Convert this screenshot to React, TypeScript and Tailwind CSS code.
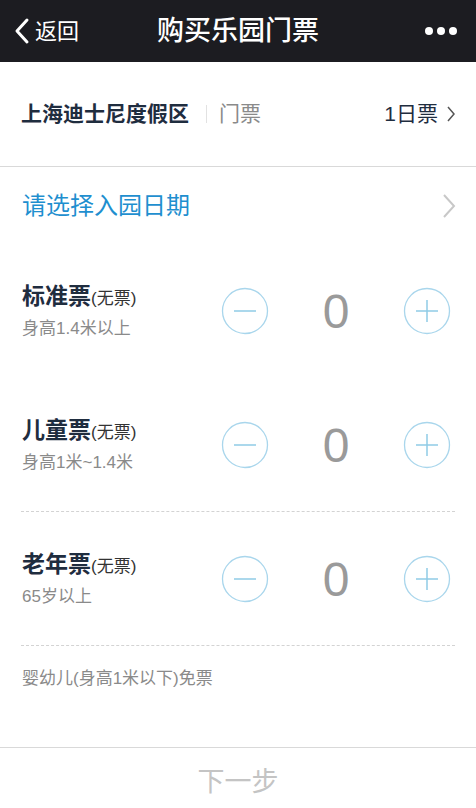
import React from "react";

const font = { fontFamily: '"Liberation Sans", "Noto Sans CJK SC", "Noto Sans", sans-serif' };

function Circle({ kind }: { kind: "minus" | "plus" }) {
  return (
    <svg width="48" height="48" viewBox="0 0 48 48" className="shrink-0">
      <circle cx="24" cy="24" r="22.5" fill="none" stroke="#a9d6ec" strokeWidth="1.3" />
      <line x1="13" y1="24" x2="35" y2="24" stroke="#8fcbe6" strokeWidth="1.5" />
      {kind === "plus" && <line x1="24" y1="13" x2="24" y2="35" stroke="#8fcbe6" strokeWidth="1.5" />}
    </svg>
  );
}

function TicketRow({ title, sub, dashed }: { title: string; sub: string; dashed?: boolean }) {
  return (
    <div className="h-[134px] flex flex-col">
      <div className="flex-1 flex items-center pl-[22px] pr-[25px]">
        <div className="flex-1 flex flex-col">
          <div className="flex items-baseline leading-[28px]">
            <span className="text-[23px] font-bold text-[#1f2d3f]">{title}</span>
            <span className="text-[17px] text-[#333]">(无票)</span>
          </div>
          <div className="text-[17px] text-[#8a8a8a] mt-[5px] leading-[22px]">{sub}</div>
        </div>
        <div className="flex items-center">
          <Circle kind="minus" />
          <div
            className="w-[134px] text-center text-[48px] leading-none text-[#9a9a9a] mt-[2px]"
            style={{ fontFamily: '"Liberation Sans", "Roboto", sans-serif' }}
          >
            0
          </div>
          <Circle kind="plus" />
        </div>
      </div>
      {dashed && <div className="mx-[21px] border-b border-dashed border-[#d3d3d3]" />}
    </div>
  );
}

export default function App() {
  return (
    <div className="w-[476px] h-[808px] bg-white flex flex-col overflow-hidden" style={font}>
      {/* Header */}
      <div className="h-[62px] bg-[#1c1c21] flex items-center px-[13px] relative shrink-0">
        <div className="flex items-center text-white">
          <svg width="18" height="28" viewBox="0 0 18 28">
            <polyline points="14,3 4,14 14,25" fill="none" stroke="#fff" strokeWidth="3" strokeLinecap="round" strokeLinejoin="round" />
          </svg>
          <span className="text-[22px] ml-[4px]">返回</span>
        </div>
        <div className="absolute left-0 right-0 text-center text-white text-[27px] font-medium pointer-events-none">
          购买乐园门票
        </div>
        <div className="ml-auto flex items-center gap-[4px] pr-[6px]">
          <span className="w-[8px] h-[8px] rounded-full bg-white" />
          <span className="w-[8px] h-[8px] rounded-full bg-white" />
          <span className="w-[8px] h-[8px] rounded-full bg-white" />
        </div>
      </div>

      {/* Park row */}
      <div className="h-[105px] flex items-center pl-[21px] pr-[20px] border-b border-[#d9d9d9] shrink-0">
        <span className="text-[21px] font-bold text-[#1f2d3f]">上海迪士尼度假区</span>
        <span className="w-px h-[18px] bg-[#e2e2e2] ml-[17px] mr-[12px]" />
        <span className="text-[21px] text-[#8a8a8a]">门票</span>
        <span className="ml-auto text-[21px] text-[#1f2d3f]">1日票</span>
        <svg width="10" height="18" viewBox="0 0 10 18" className="ml-[8px]">
          <polyline points="2,2 8,9 2,16" fill="none" stroke="#555" strokeWidth="1.5" />
        </svg>
      </div>

      {/* Date row */}
      <div className="h-[77px] flex items-center pl-[22px] pr-[20px] shrink-0">
        <span className="text-[24px] text-[#1f8fcf]">请选择入园日期</span>
        <svg width="14" height="26" viewBox="0 0 14 26" className="ml-auto">
          <polyline points="2,2 12,13 2,24" fill="none" stroke="#c8c8c8" strokeWidth="2" />
        </svg>
      </div>

      <TicketRow title="标准票" sub="身高1.4米以上" />
      <TicketRow title="儿童票" sub="身高1米~1.4米" dashed />
      <TicketRow title="老年票" sub="65岁以上" dashed />

      <div className="h-[66px] flex items-center pl-[22px] text-[17px] text-[#8a8a8a] shrink-0">
        婴幼儿(身高1米以下)免票
      </div>

      <div className="flex-1" />

      <div className="h-[61px] border-t border-[#d9d9d9] flex items-center justify-center shrink-0">
        <span className="text-[27px] text-[#c4c4c4] mt-[8px]">下一步</span>
      </div>
    </div>
  );
}
